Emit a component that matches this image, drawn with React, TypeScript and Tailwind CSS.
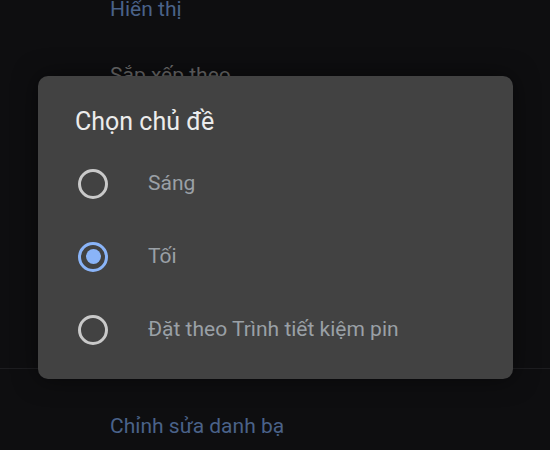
const options = [
  { label: "Sáng", checked: false },
  { label: "Tối", checked: true },
  { label: "Đặt theo Trình tiết kiệm pin", checked: false },
];

function Radio({ checked }: { checked: boolean }) {
  if (checked) {
    return (
      <div className="w-[30px] h-[30px] rounded-full border-[3px] border-[#8ab4f8] flex items-center justify-center">
        <div className="w-[15px] h-[15px] rounded-full bg-[#8ab4f8]" />
      </div>
    );
  }
  return <div className="w-[30px] h-[30px] rounded-full border-[3px] border-[#c9c9c9]" />;
}

export default function App() {
  return (
    <div
      className="relative w-[550px] h-[450px] overflow-hidden bg-[#0e0e10]"
      style={{ fontFamily: "Roboto, 'Noto Sans', sans-serif" }}
    >
      {/* settings list behind the dialog */}
      <div className="pl-[110px]">
        <div className="-mt-[6px] h-[60px] text-[21px] text-[#4a6289]">Hiển thị</div>
        <div className="mt-[6px] h-[60px] text-[21px] text-[#6b6b6b]">Sắp xếp theo</div>
      </div>
      <div className="mt-[248px] h-px bg-[#1d1d20]" />
      <div className="pl-[110px] pt-[42px] text-[21px] text-[#4a6289]">Chỉnh sửa danh bạ</div>

      {/* dialog */}
      <div className="absolute left-[38px] top-[76px] w-[475px] h-[303px] rounded-[10px] bg-[#424242] shadow-[0_0_24px_rgba(0,0,0,0.5)]">
        <div className="pl-[37px] pt-[27px] h-[71px] text-[25px] text-[#ececec]">Chọn chủ đề</div>
        {options.map((o) => (
          <div key={o.label} className="h-[73px] flex items-center pl-[40px]">
            <Radio checked={o.checked} />
            <span className="ml-[40px] text-[21px] text-[#9aa0a6]">{o.label}</span>
          </div>
        ))}
      </div>
    </div>
  );
}
